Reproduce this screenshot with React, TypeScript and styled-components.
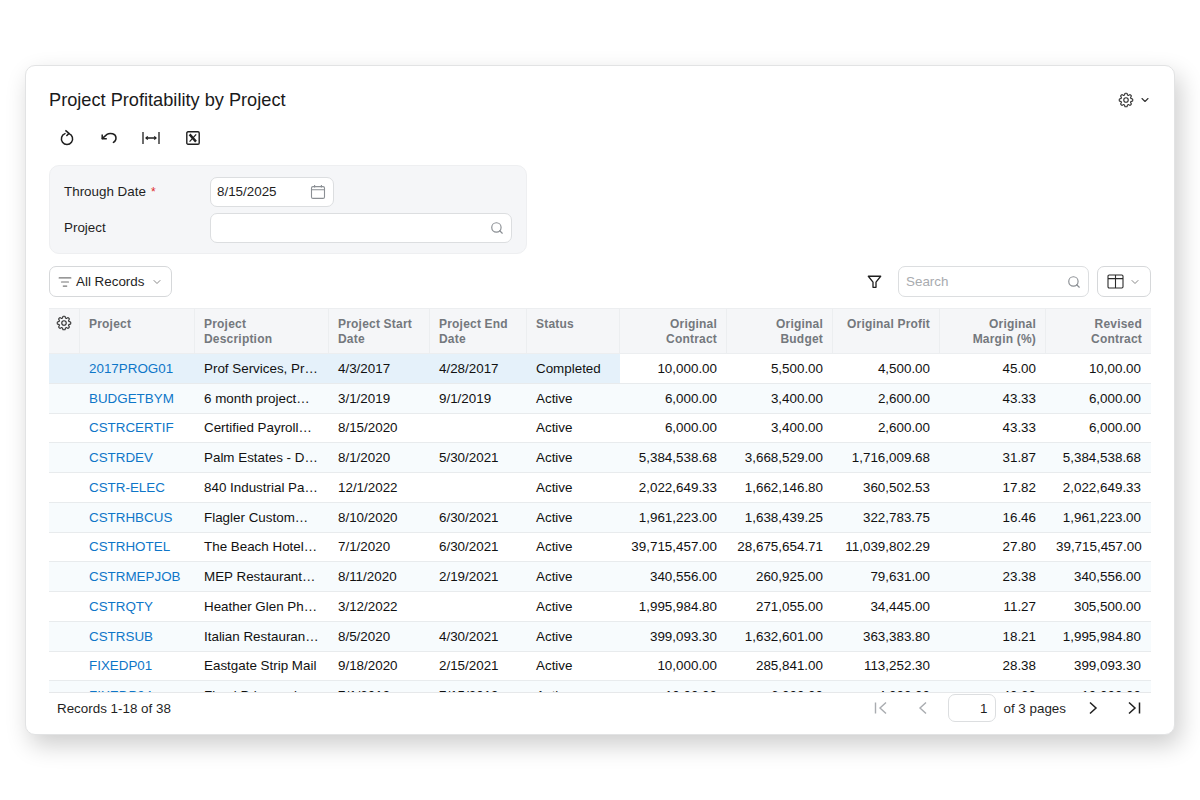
import styled, { createGlobalStyle } from 'styled-components'
import { ChevronDown, ListFilter, Search } from 'lucide-react'
import { HiOutlineCog8Tooth } from 'react-icons/hi2'

const GlobalStyle = createGlobalStyle`
  html, body { margin: 0; padding: 0; background: #fff; }
  body { font-family: "Liberation Sans", Arial, sans-serif; color: #111; }
`

const columns = [
  { title: 'Project', width: 115 },
  { title: 'Project\nDescription', width: 134 },
  { title: 'Project Start Date', width: 101 },
  { title: 'Project End Date', width: 97 },
  { title: 'Status', width: 93 },
  { title: 'Original Contract', width: 107, right: true },
  { title: 'Original Budget', width: 106, right: true },
  { title: 'Original Profit', width: 107, right: true },
  { title: 'Original Margin (%)', width: 106, right: true },
  { title: 'Revised Contract', width: 105, right: true },
]

const rows = [
  ['2017PROG01', 'Prof Services, Pr…', '4/3/2017', '4/28/2017', 'Completed', '10,000.00', '5,500.00', '4,500.00', '45.00', '10,00.00'],
  ['BUDGETBYM', '6 month project…', '3/1/2019', '9/1/2019', 'Active', '6,000.00', '3,400.00', '2,600.00', '43.33', '6,000.00'],
  ['CSTRCERTIF', 'Certified Payroll…', '8/15/2020', '', 'Active', '6,000.00', '3,400.00', '2,600.00', '43.33', '6,000.00'],
  ['CSTRDEV', 'Palm Estates - D…', '8/1/2020', '5/30/2021', 'Active', '5,384,538.68', '3,668,529.00', '1,716,009.68', '31.87', '5,384,538.68'],
  ['CSTR-ELEC', '840 Industrial Pa…', '12/1/2022', '', 'Active', '2,022,649.33', '1,662,146.80', '360,502.53', '17.82', '2,022,649.33'],
  ['CSTRHBCUS', 'Flagler Custom…', '8/10/2020', '6/30/2021', 'Active', '1,961,223.00', '1,638,439.25', '322,783.75', '16.46', '1,961,223.00'],
  ['CSTRHOTEL', 'The Beach Hotel…', '7/1/2020', '6/30/2021', 'Active', '39,715,457.00', '28,675,654.71', '11,039,802.29', '27.80', '39,715,457.00'],
  ['CSTRMEPJOB', 'MEP Restaurant…', '8/11/2020', '2/19/2021', 'Active', '340,556.00', '260,925.00', '79,631.00', '23.38', '340,556.00'],
  ['CSTRQTY', 'Heather Glen Ph…', '3/12/2022', '', 'Active', '1,995,984.80', '271,055.00', '34,445.00', '11.27', '305,500.00'],
  ['CSTRSUB', 'Italian Restauran…', '8/5/2020', '4/30/2021', 'Active', '399,093.30', '1,632,601.00', '363,383.80', '18.21', '1,995,984.80'],
  ['FIXEDP01', 'Eastgate Strip Mail', '9/18/2020', '2/15/2021', 'Active', '10,000.00', '285,841.00', '113,252.30', '28.38', '399,093.30'],
  ['FIXEDP04', 'Fixed Price proje…', '7/1/2019', '7/15/2019', 'Active', '10,00.00', '6,000.00', '4,000.00', '40.00', '10,000.00'],
]

const RefreshIcon = () => (
  <svg width="18" height="18" viewBox="0 0 18 18" fill="none" stroke="#1f1f1f" strokeWidth="1.5">
    <path d="M7 4.6a5.6 5.6 0 1 0 4 0" strokeLinecap="round" />
    <path d="M7.4 1.4 11 4.4 8.4 7" strokeLinejoin="round" />
  </svg>
)

const UndoIcon = () => (
  <svg width="18" height="18" viewBox="0 0 18 18" fill="none" stroke="#1f1f1f" strokeWidth="1.5">
    <path d="M2.4 9.4 7 5.4C10 3.4 16 4.6 16 9c0 2-1 3.6-2.6 4.4" strokeLinecap="round" />
    <path d="M2.2 5.4v4.4h4.6" strokeLinejoin="round" />
  </svg>
)

const FitIcon = () => (
  <svg width="18" height="18" viewBox="0 0 18 18" fill="none" stroke="#1f1f1f" strokeWidth="1.3">
    <path d="M1 3v12M17 3v12M4 9h10" />
    <path d="M5.8 7.4 4 9l1.8 1.6M12.2 7.4 14 9l-1.8 1.6" />
  </svg>
)

const ExcelIcon = () => (
  <svg width="14" height="14" viewBox="0 0 14 14" fill="none">
    <rect x="0.8" y="0.8" width="12.4" height="12.4" rx="1.2" stroke="#1f1f1f" strokeWidth="1.4" />
    <path d="M3.6 3.4 10 10.6" stroke="#1f1f1f" strokeWidth="2.4" />
    <path d="M10.2 3.4 3.6 10.6" stroke="#1f1f1f" strokeWidth="1.2" />
  </svg>
)

const CalendarIcon = () => (
  <svg width="16" height="16" viewBox="0 0 16 16" fill="none" stroke="#8b8f94" strokeWidth="1.1">
    <rect x="1.5" y="2.6" width="13" height="11.8" rx="1.5" />
    <path d="M1.5 5.8h13M4.6 1v2.4M11.4 1v2.4" />
  </svg>
)

const FunnelIcon = () => (
  <svg width="15" height="15" viewBox="0 0 16 16" fill="none" stroke="#1f1f1f" strokeWidth="1.4" strokeLinejoin="round">
    <path d="M1.4 2.4h13.2L9.6 8.6v5.6H6.4V8.6z" />
  </svg>
)

const ColumnsIcon = () => (
  <svg width="17" height="15" viewBox="0 0 17 15" fill="none" stroke="#2a2a2a" strokeWidth="1.1">
    <rect x="1" y="1" width="15" height="13" rx="1.2" />
    <path d="M1 4.6h15M8.5 1v13" />
  </svg>
)

const FirstIcon = () => (
  <svg width="14" height="14" viewBox="0 0 14 14" fill="none" stroke="currentColor" strokeWidth="1.4">
    <path d="M1.5 1.5v11M12 1.5 6 7l6 5.5" />
  </svg>
)

const PrevIcon = () => (
  <svg width="14" height="14" viewBox="0 0 14 14" fill="none" stroke="currentColor" strokeWidth="1.4">
    <path d="M10 1.5 4 7l6 5.5" />
  </svg>
)

const NextIcon = () => (
  <svg width="14" height="14" viewBox="0 0 14 14" fill="none" stroke="currentColor" strokeWidth="1.5">
    <path d="M4 1.5 10 7l-6 5.5" />
  </svg>
)

const LastIcon = () => (
  <svg width="14" height="14" viewBox="0 0 14 14" fill="none" stroke="currentColor" strokeWidth="1.5">
    <path d="M2 1.5 8 7l-6 5.5M12.5 1.5v11" />
  </svg>
)

const Page = styled.div`
  padding: 65px 25px;
`

const Card = styled.div`
  height: 670px;
  box-sizing: border-box;
  display: flex;
  flex-direction: column;
  background: #fff;
  border: 1px solid #e2e3e4;
  border-radius: 10px;
  padding: 0 23px;
  box-shadow: 5px 10px 24px rgba(0, 0, 0, 0.2);
`

const Header = styled.div`
  display: flex;
  align-items: center;
  justify-content: space-between;
  height: 62px;
  box-sizing: border-box;
  padding-top: 6px;
  flex: none;
`

const Title = styled.h1`
  margin: 0;
  font-size: 18.2px;
  font-weight: 400;
  color: #1a1a1a;
`

const SettingsMenu = styled.div`
  display: flex;
  align-items: center;
  gap: 4px;
  color: #333;
`

const Toolbar = styled.div`
  display: flex;
  align-items: center;
  gap: 24px;
  height: 20px;
  padding-left: 9px;
  margin-bottom: 17px;
  flex: none;
`

const ToolButton = styled.span`
  width: 18px;
  height: 18px;
  display: flex;
  align-items: center;
  justify-content: center;
`

const FilterPanel = styled.div`
  width: 478px;
  height: 89px;
  box-sizing: border-box;
  flex: none;
  display: grid;
  grid-template-columns: 146px 1fr;
  grid-auto-rows: 30px;
  row-gap: 6px;
  align-content: center;
  align-items: center;
  padding: 0 14px;
  background: #f5f6f8;
  border: 1px solid #eeeff1;
  border-radius: 10px;
`

const FieldLabel = styled.label`
  font-size: 13.4px;
  color: #1f1f1f;
`

const Required = styled.span`
  color: #e02b2b;
  margin-left: 5px;
  font-size: 12px;
`

const Field = styled.div<{ $width?: number }>`
  height: 30px;
  box-sizing: border-box;
  width: ${p => (p.$width ? `${p.$width}px` : '100%')};
  display: flex;
  align-items: center;
  justify-content: space-between;
  padding: 0 7px 0 6px;
  font-size: 13.4px;
  color: #1f1f1f;
  background: #fff;
  border: 1px solid #dcdee0;
  border-radius: 7px;
`

const ActionBar = styled.div`
  display: flex;
  align-items: center;
  justify-content: space-between;
  margin-top: 12px;
  margin-bottom: 11px;
  height: 31px;
  flex: none;
`

const ActionGroup = styled.div`
  display: flex;
  align-items: center;
`

const FilterButton = styled.div`
  height: 31px;
  width: 123px;
  box-sizing: border-box;
  display: flex;
  align-items: center;
  gap: 4px;
  padding-left: 8px;
  font-size: 13.4px;
  color: #1f1f1f;
  background: #fff;
  border: 1px solid #d6d8da;
  border-radius: 7px;
`

const SearchBox = styled(Field)`
  width: 191px;
  height: 31px;
  margin-left: 16px;
  padding-left: 7px;
  color: #a8abaf;
`

const ColumnsButton = styled.div`
  width: 54px;
  height: 31px;
  box-sizing: border-box;
  margin-left: 8px;
  display: flex;
  align-items: center;
  justify-content: center;
  gap: 5px;
  border: 1px solid #d6d8da;
  border-radius: 7px;
`

const TableArea = styled.div`
  height: 384px;
  flex: none;
  overflow: hidden;
`

const Table = styled.table`
  width: 1102px;
  table-layout: fixed;
  border-collapse: separate;
  border-spacing: 0;
`

const HeadCell = styled.th<{ $right?: boolean }>`
  height: 46px;
  box-sizing: border-box;
  vertical-align: top;
  padding: 8px 9px 0;
  text-align: ${p => (p.$right ? 'right' : 'left')};
  font-size: 12px;
  line-height: 15px;
  font-weight: 700;
  letter-spacing: 0.2px;
  white-space: pre-line;
  color: #74787d;
  background: #f5f6f8;
  border-top: 1px solid #eceef0;
  border-right: 1px solid #eceef0;
  border-bottom: 1px solid #eceef0;
  &:last-child { border-right: none; }
`

const GearCell = styled(HeadCell)`
  padding: 5px 0 0 6px;
`

const Row = styled.tr<{ $tint: boolean }>`
  background: ${p => (p.$tint ? '#f7fbfd' : '#fff')};
`

const Cell = styled.td<{ $right?: boolean; $active?: boolean }>`
  height: 29.75px;
  box-sizing: border-box;
  padding: 0 ${p => (p.$right ? '10px' : '9px')};
  text-align: ${p => (p.$right ? 'right' : 'left')};
  font-size: 13.4px;
  color: #111;
  white-space: nowrap;
  overflow: hidden;
  background: ${p => (p.$active ? '#e5f1fa' : 'transparent')};
  border-bottom: 1px solid #e8ebed;
`

const ProjectLink = styled.a`
  color: #0e76c8;
  text-decoration: none;
`

const Footer = styled.div`
  flex: 1;
  display: flex;
  align-items: center;
  justify-content: space-between;
  padding: 0 10px 11px 8px;
  font-size: 13.4px;
  color: #1f1f1f;
  border-top: 1px solid #e6e8ea;
`

const Pager = styled.div`
  display: flex;
  align-items: center;
`

const PageButton = styled.span<{ $disabled?: boolean; $gap?: number }>`
  display: flex;
  margin-left: ${p => p.$gap ?? 0}px;
  color: ${p => (p.$disabled ? '#a9acb0' : '#1f1f1f')};
`

const PageInput = styled.div`
  width: 48px;
  height: 28px;
  box-sizing: border-box;
  margin: 0 7px 0 18px;
  padding-right: 8px;
  display: flex;
  align-items: center;
  justify-content: flex-end;
  border: 1px solid #dcdee0;
  border-radius: 7px;
`

export default function App() {
  return (
    <Page>
      <GlobalStyle />
      <Card>
        <Header>
          <Title>Project Profitability by Project</Title>
          <SettingsMenu>
            <HiOutlineCog8Tooth size={18} />
            <ChevronDown size={12} strokeWidth={2.2} />
          </SettingsMenu>
        </Header>
        <Toolbar>
          <ToolButton><RefreshIcon /></ToolButton>
          <ToolButton><UndoIcon /></ToolButton>
          <ToolButton><FitIcon /></ToolButton>
          <ToolButton><ExcelIcon /></ToolButton>
        </Toolbar>
        <FilterPanel>
          <FieldLabel>Through Date<Required>*</Required></FieldLabel>
          <Field $width={124}>8/15/2025<CalendarIcon /></Field>
          <FieldLabel>Project</FieldLabel>
          <Field><span /><Search size={14} color="#8b8f94" /></Field>
        </FilterPanel>
        <ActionBar>
          <FilterButton>
            <ListFilter size={14} color="#777" />
            All Records
            <ChevronDown size={12} color="#888" style={{ marginLeft: 3 }} />
          </FilterButton>
          <ActionGroup>
            <FunnelIcon />
            <SearchBox>Search<Search size={14} color="#8b8f94" /></SearchBox>
            <ColumnsButton>
              <ColumnsIcon />
              <ChevronDown size={12} color="#888" />
            </ColumnsButton>
          </ActionGroup>
        </ActionBar>
        <TableArea>
          <Table>
            <colgroup>
              <col style={{ width: 31 }} />
              {columns.map(c => <col key={c.title} style={{ width: c.width }} />)}
            </colgroup>
            <thead>
              <tr>
                <GearCell><HiOutlineCog8Tooth size={18} color="#333" /></GearCell>
                {columns.map(c => <HeadCell key={c.title} $right={c.right}>{c.title}</HeadCell>)}
              </tr>
            </thead>
            <tbody>
              {rows.map((row, i) => (
                <Row key={row[0]} $tint={i % 2 === 1}>
                  <Cell $active={i === 0} />
                  {row.map((value, j) => (
                    <Cell key={j} $right={columns[j].right} $active={i === 0 && j < 5}>
                      {j === 0 ? <ProjectLink>{value}</ProjectLink> : value}
                    </Cell>
                  ))}
                </Row>
              ))}
            </tbody>
          </Table>
        </TableArea>
        <Footer>
          <span>Records 1-18 of 38</span>
          <Pager>
            <PageButton $disabled><FirstIcon /></PageButton>
            <PageButton $disabled $gap={28}><PrevIcon /></PageButton>
            <PageInput>1</PageInput>
            <span>of 3 pages</span>
            <PageButton $gap={20}><NextIcon /></PageButton>
            <PageButton $gap={27}><LastIcon /></PageButton>
          </Pager>
        </Footer>
      </Card>
    </Page>
  )
}
